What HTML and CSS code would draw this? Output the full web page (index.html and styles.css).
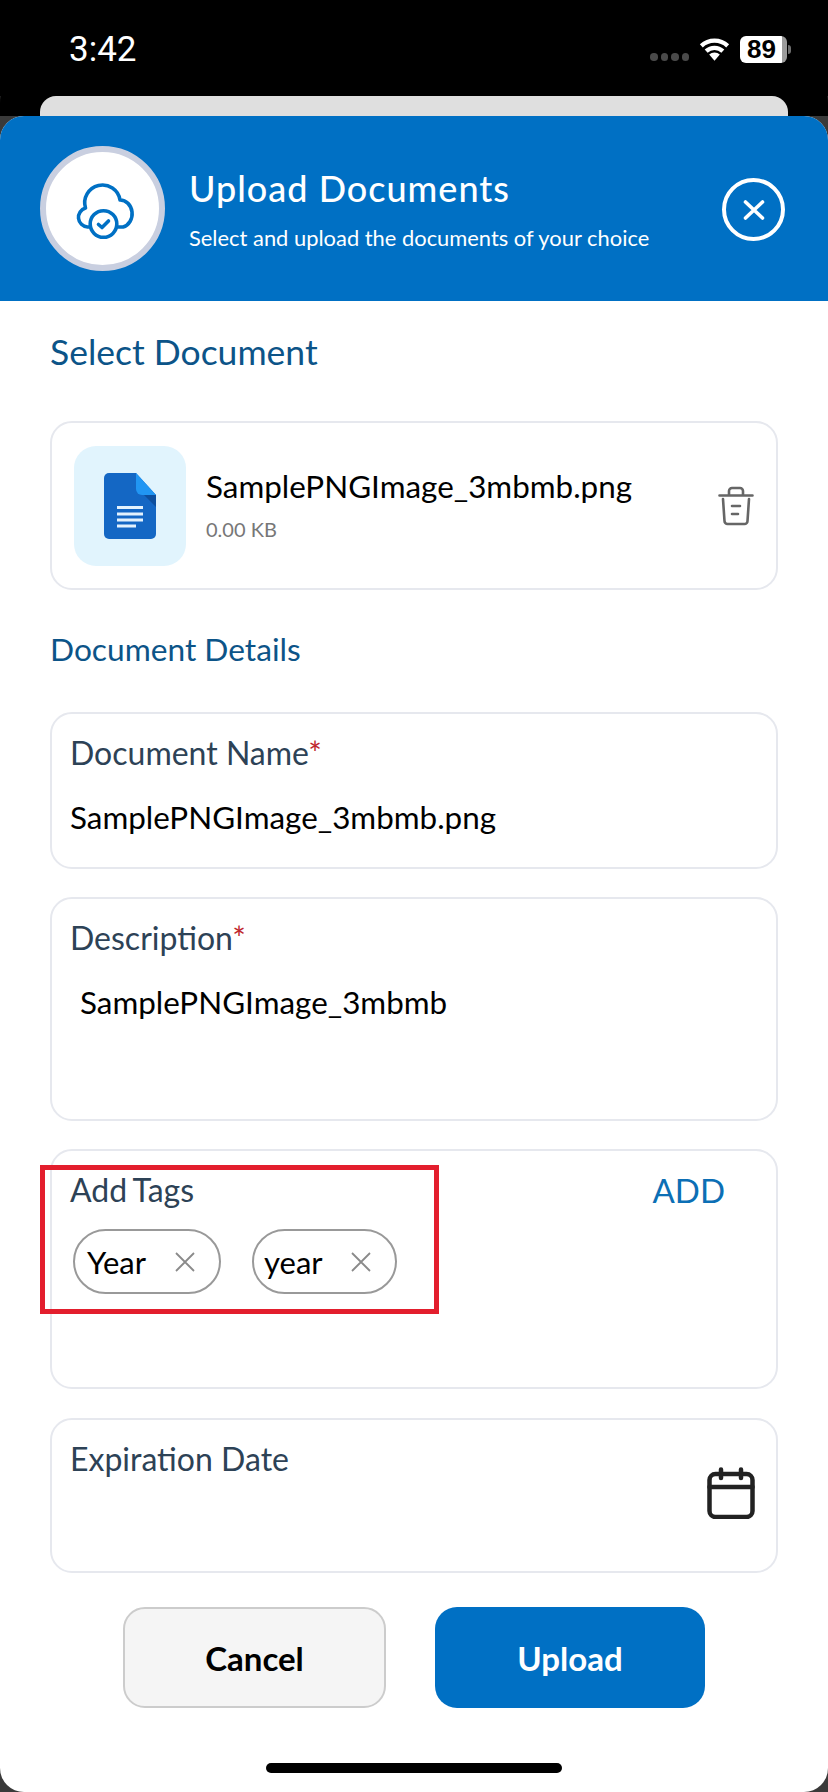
FILE: index.html
```html
<!DOCTYPE html>
<html lang="en">
<head>
  <meta charset="UTF-8" />
  <meta name="viewport" content="width=device-width, initial-scale=1.0" />
  <title>Upload Documents</title>
  <link rel="stylesheet" href="styles.css">
</head>
<body>
  <div class="screen">
    <div class="status-bar">
      <span class="time">3:42</span>
      <div class="status-icons">
        <div class="signal"><i></i><i></i><i></i><i></i></div>
        <svg class="wifi" width="31" height="24" viewBox="0 0 32 24">
          <path d="M16 24 10.500 17.800a8 8 0 0 1 11 0Z" fill="#fff"/>
          <path d="M7.400 14.200a12.500 12.500 0 0 1 17.200 0M2.400 8.800a19.800 19.800 0 0 1 27.200 0" fill="none" stroke="#fff" stroke-width="4.400"/>
        </svg>
        <div class="battery"><span>89</span></div>
        <div class="battery-nub"></div>
      </div>
    </div>
    <div class="peek"></div>

    <div class="sheet">
      <header class="sheet-head">
        <div class="avatar">
          <svg width="66" height="62" viewBox="0 0 66 62" fill="none" stroke="#0070c4" stroke-width="3.600" stroke-linecap="round" stroke-linejoin="round">
            <g transform="translate(2 1)">
              <path d="M18 48H15.500A9.700 9.700 0 0 1 13.500 29A17.750 17.750 0 1 1 48 21A12 13.700 0 0 1 51 48H46"/>
              <circle cx="31.500" cy="45" r="13.300" fill="#fff"/>
              <path d="M26.500 45.500 30 48.500 36.500 42"/>
            </g>
          </svg>
        </div>
        <div class="head-text">
          <h1>Upload Documents</h1>
          <p>Select and upload the documents of your choice</p>
        </div>
        <div class="close">
          <svg width="24" height="24" viewBox="0 0 24 24" fill="none" stroke="#fff" stroke-width="3.600" stroke-linecap="round">
            <path d="M3.500 4 20.500 20M20.500 4 3.500 20"/>
          </svg>
        </div>
      </header>

      <div class="sheet-body">
        <h2 class="section-title first">Select Document</h2>

        <div class="card file-card">
          <div class="file-tile">
            <svg width="52" height="66" viewBox="0 0 52 66">
              <path d="M5 0H32L52 22V61a5 5 0 0 1-5 5H5a5 5 0 0 1-5-5V5a5 5 0 0 1 5-5Z" fill="#1467c4"/>
              <path d="M34 16 52 34V22Z" fill="#0d4f9e"/>
              <path d="M32 0 52 22H38a6 6 0 0 1-6-6Z" fill="#2196f3"/>
              <path d="M13 33H39V36H13ZM13 39.500H39V42.500H13ZM13 45.500H39V48.500H13ZM13 51.500H32V54.500H13Z" fill="#e3f2fd"/>
            </svg>
          </div>
          <div class="file-info">
            <div class="file-name">SamplePNGImage_3mbmb.png</div>
            <div class="file-size">0.00 KB</div>
          </div>
          <svg class="trash" width="36" height="40" viewBox="0 0 36 40" fill="none" stroke="#666" stroke-width="2.600" stroke-linecap="round" stroke-linejoin="round">
            <path d="M1.500 9.500H34.500M11 9V5a3 3 0 0 1 3-3h8a3 3 0 0 1 3 3v4"/>
            <path d="M5 13 6.500 35a3 3 0 0 0 3 3H26.500a3 3 0 0 0 3-3L31 13"/>
            <path d="M14 20H22M14 28H20"/>
          </svg>
        </div>

        <h2 class="section-title details">Document Details</h2>

        <div class="card field name-field">
          <div class="field-label">Document Name<span class="req">*</span></div>
          <div class="field-value">SamplePNGImage_3mbmb.png</div>
        </div>

        <div class="card field desc-field">
          <div class="field-label">Description<span class="req">*</span></div>
          <div class="field-value indent">SamplePNGImage_3mbmb</div>
        </div>

        <div class="card field tags-field">
          <div class="tags-top">
            <div class="field-label tags-label">Add Tags</div>
            <div class="add-link">ADD</div>
          </div>
          <div class="chips">
            <div class="chip chip-wide">Year
              <svg width="20" height="20" viewBox="0 0 20 20" stroke="#8a8a8a" stroke-width="1.800"><path d="M1 1 19 19M19 1 1 19"/></svg>
            </div>
            <div class="chip">year
              <svg width="20" height="20" viewBox="0 0 20 20" stroke="#8a8a8a" stroke-width="1.800"><path d="M1 1 19 19M19 1 1 19"/></svg>
            </div>
          </div>
          <div class="annotation"></div>
        </div>

        <div class="card field date-field">
          <div class="field-label">Expiration Date</div>
          <svg class="calendar" width="48" height="52" viewBox="0 0 48 52" fill="none" stroke="#222" stroke-width="4.500" stroke-linecap="round" stroke-linejoin="round">
            <rect x="2.500" y="7" width="43" height="43" rx="6"/>
            <path d="M2.500 20H45.500M14 2.500V11M34 2.500V11"/>
          </svg>
        </div>

        <div class="actions">
          <button class="btn btn-cancel">Cancel</button>
          <button class="btn btn-upload">Upload</button>
        </div>
      </div>
      <div class="home-bar"></div>
    </div>
  </div>
</body>
</html>
```

FILE: styles.css
```css
* {
  box-sizing: border-box;
}
body {
  margin: 0;
  background: #000;
  font-family: 'Lato', 'Open Sans', sans-serif;
}
.screen {
  width: 828px;
  height: 1792px;
  overflow: hidden;
  display: flex;
  flex-direction: column;
  background: #3a3a3a;
}
.status-bar {
  height: 96px;
  flex: none;
  background: #000;
  display: flex;
  justify-content: space-between;
  padding: 30px 37px 0 69px;
}
.time {
  color: #fff;
  font-family: 'Roboto', sans-serif;
  font-size: 35px;
  font-weight: 400;
  line-height: 40px;
}
.status-icons {
  display: flex;
  align-items: flex-start;
  padding-top: 6px;
}
.signal {
  display: flex;
  gap: 3px;
  margin-top: 17px;
  margin-right: 10px;
}
.signal i {
  width: 7.500px;
  height: 7.500px;
  border-radius: 50%;
  background: #4a4a4a;
}
.wifi {
  margin-top: 1px;
  margin-right: 10px;
}
.battery {
  width: 47px;
  height: 27px;
  border-radius: 6px;
  background: linear-gradient(90deg, #fff 89%, #9b9b9b 89%);
  color: #000;
  font-family: 'Liberation Sans', sans-serif;
  font-size: 26px;
  font-weight: 700;
  line-height: 27px;
  padding-left: 7px;
}
.battery-nub {
  width: 3px;
  height: 9px;
  margin: 9px 0 0 1px;
  border-radius: 0 3px 3px 0;
  background: #6e6e6e;
}
.peek {
  height: 20px;
  flex: none;
  margin: 0 40px;
  background: #dfdfdf;
  border-radius: 16px 16px 0 0;
  box-shadow: 0 0 0 40px #000;
  clip-path: inset(0 -40px);
}
.sheet {
  flex: 1;
  position: relative;
  background: #fff;
  border-radius: 24px;
  overflow: hidden;
}
.sheet-head {
  height: 185px;
  background: #0070c4;
  display: flex;
  align-items: flex-start;
  padding: 30px 43px 0 40px;
  color: #fff;
}
.avatar {
  width: 125px;
  height: 125px;
  flex: none;
  border-radius: 50%;
  background: #fff;
  border: 6px solid #c9cfe0;
  display: flex;
  align-items: center;
  justify-content: center;
}
.head-text {
  flex: 1;
  margin-left: 24px;
  padding-top: 19px;
}
.head-text h1 {
  margin: 0;
  font-size: 36px;
  font-weight: 500;
  letter-spacing: 1px;
  line-height: 46px;
}
.head-text p {
  margin: 12px 0 0;
  font-size: 21.900px;
  line-height: 30px;
}
.close {
  width: 63px;
  height: 63px;
  flex: none;
  margin-top: 32px;
  border-radius: 50%;
  border: 4px solid #fff;
  display: flex;
  align-items: center;
  justify-content: center;
}
.sheet-body {
  padding: 0 50px;
}
.section-title {
  margin: 0;
  color: #0c5488;
  font-size: 35.500px;
  font-weight: 400;
  line-height: 44px;
}
.section-title.first {
  margin-top: 29px;
}
.section-title.details {
  margin-top: 37px;
  font-size: 31.700px;
}
.card {
  border: 2px solid #e6e8ee;
  border-radius: 22px;
  background: #fff;
}
.file-card {
  height: 169px;
  margin-top: 47px;
  display: flex;
  align-items: center;
  padding: 0 22px;
}
.file-tile {
  width: 112px;
  height: 120px;
  flex: none;
  border-radius: 22px;
  background: #e1f4fd;
  display: flex;
  align-items: center;
  justify-content: center;
}
.file-info {
  flex: 1;
  margin-left: 20px;
  padding-bottom: 2px;
}
.file-name {
  font-size: 31.400px;
  color: #000;
  line-height: 40px;
}
.file-size {
  margin-top: 8px;
  font-size: 20px;
  color: #777;
  line-height: 30px;
}
.trash {
  flex: none;
}
.field {
  position: relative;
  padding: 17px 18px 0;
}
.field-label {
  font-size: 32px;
  line-height: 44px;
  color: #2d4256;
}
.tags-label {
  word-spacing: -2px;
}
.req {
  color: #c0272d;
}
.field-value {
  margin-top: 22px;
  font-size: 31.400px;
  line-height: 40px;
  color: #000;
}
.field-value.indent {
  margin-left: 10px;
}
.name-field {
  height: 157px;
  margin-top: 41px;
}
.desc-field {
  height: 224px;
  margin-top: 28px;
}
.tags-field {
  height: 240px;
  margin-top: 28px;
}
.tags-top {
  display: flex;
  justify-content: space-between;
  padding-right: 33px;
}
.add-link {
  font-size: 33px;
  line-height: 44px;
  color: #0c6fb5;
}
.chips {
  display: flex;
  gap: 31px;
  margin: 17px 0 0 3px;
}
.chip {
  height: 65px;
  width: 145px;
  padding: 0 24px 0 10px;
  border: 2px solid #999;
  border-radius: 33px;
  display: flex;
  align-items: center;
  justify-content: space-between;
  font-size: 31px;
  color: #000;
}
.chip-wide {
  width: 148px;
  padding-left: 12px;
}
.annotation {
  position: absolute;
  left: -12px;
  top: 14px;
  width: 399px;
  height: 149px;
  border: 5px solid #e31e2d;
}
.date-field {
  height: 155px;
  margin-top: 29px;
}
.calendar {
  position: absolute;
  right: 21px;
  top: 47px;
}
.actions {
  display: flex;
  gap: 49px;
  margin: 34px 73px 0;
}
.btn {
  height: 101px;
  border-radius: 22px;
  font-family: inherit;
  font-size: 33px;
  font-weight: 700;
}
.btn-cancel {
  width: 263px;
  background: #f5f5f5;
  border: 2px solid #ccc;
  color: #000;
}
.btn-upload {
  width: 270px;
  background: #0070c4;
  border: none;
  color: #fff;
}
.home-bar {
  position: absolute;
  left: 266px;
  bottom: 19px;
  width: 296px;
  height: 10px;
  border-radius: 5px;
  background: #000;
}
```
